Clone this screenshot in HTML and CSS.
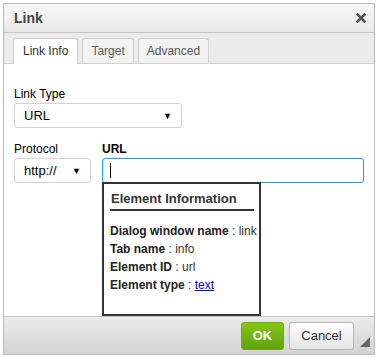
FILE: index.html
```html
<!DOCTYPE html>
<html lang="en">
<head>
  <meta charset="UTF-8" />
  <title>Link</title>
  <link rel="stylesheet" href="styles.css">
</head>
<body>

<div class="dialog">
  <div class="title-bar">
    <span class="title">Link</span>
    <svg class="close" width="10" height="10" viewBox="0 0 10 10">
      <path d="M1.5 1.5 L8.5 8.5 M8.5 1.5 L1.5 8.5" stroke="#555" stroke-width="2.6" stroke-linecap="square"/>
    </svg>
  </div>

  <div class="tabs">
    <div class="tab active">Link Info</div>
    <div class="tab">Target</div>
    <div class="tab">Advanced</div>
  </div>

  <div class="content">
    <div class="field">
      <label>Link Type</label>
      <div class="select type-select"><span>URL</span><span class="arrow">&#9660;</span></div>
    </div>

    <div class="row">
      <div class="field">
        <label>Protocol</label>
        <div class="select proto-select"><span>http://</span><span class="arrow">&#9660;</span></div>
      </div>
      <div class="field url-field">
        <label class="bold">URL</label>
        <div class="input"><span class="caret"></span></div>
        <div class="info">
          <div class="info-title">Element Information</div>
          <div class="info-line"><b>Dialog window name</b> : link</div>
          <div class="info-line"><b>Tab name</b> : info</div>
          <div class="info-line"><b>Element ID</b> : url</div>
          <div class="info-line"><b>Element type</b> : <a href="#">text</a></div>
        </div>
      </div>
    </div>
  </div>

  <div class="footer">
    <button class="btn ok">OK</button>
    <button class="btn cancel">Cancel</button>
    <span class="grip"></span>
  </div>
</div>

</body>
</html>
```

FILE: styles.css
```css
body {
  margin: 0;
  padding: 3px;
  background: #fff;
  font-family: "Liberation Sans", Arial, sans-serif;
  font-size: 12px;
  color: #333;
}
.dialog {
  width: 370px;
  height: 350px;
  border: 1px solid #bcbcbc;
  display: flex;
  flex-direction: column;
  background: #fff;
}
.title-bar {
  height: 28px;
  border-bottom: 1px solid #c5c5c5;
  background: linear-gradient(#f8f8f8, #e9e9e9);
  display: flex;
  align-items: center;
  justify-content: space-between;
  padding: 0 8px 0 10px;
}
.title {
  font-weight: bold;
  font-size: 14px;
  color: #474747;
}
.close {
  display: block;
}
.tabs {
  height: 30px;
  background: #ebebeb;
  border-bottom: 1px solid #d1d1d1;
  display: flex;
  align-items: flex-end;
  gap: 4px;
  padding-left: 9px;
}
.tab {
  height: 24px;
  line-height: 24px;
  padding: 0 8px;
  border: 1px solid #d1d1d1;
  border-bottom: none;
  border-radius: 3px 3px 0 0;
  background: #f2f2f2;
  color: #595959;
}
.tab.active {
  background: #fff;
  color: #333;
  height: 25px;
  margin-bottom: -1px;
  padding: 0 9px;
}
.content {
  flex: 1;
  padding: 23px 10px 0 10px;
}
.field label {
  display: block;
  margin-bottom: 1px;
  line-height: 15px;
  color: #000;
}
.field label.bold {
  font-weight: bold;
}
.select {
  box-sizing: border-box;
  height: 25px;
  border: 1px solid #d3d3d3;
  border-radius: 3px;
  display: flex;
  align-items: center;
  justify-content: space-between;
  padding: 0 9px;
  font-size: 13px;
  color: #000;
}
.select .arrow {
  font-size: 9px;
}
.type-select {
  width: 168px;
}
.row {
  display: flex;
  gap: 11px;
  margin-top: 14px;
}
.proto-select {
  width: 77px;
}
.url-field {
  flex: 1;
}
.input {
  box-sizing: border-box;
  height: 25px;
  width: 262px;
  border: 1px solid #139ff7;
  border-radius: 3px;
  padding: 4px 7px;
}
.caret {
  display: block;
  width: 1px;
  height: 15px;
  background: #000;
}
.info {
  box-sizing: border-box;
  width: 159px;
  height: 134px;
  border: 2px solid #333;
  padding: 3px 5px 0 6px;
  margin-top: -1px;
  color: #333;
  white-space: nowrap;
}
.info-title {
  font-weight: bold;
  font-size: 13px;
  padding: 4px 0 3px 1px;
  border-bottom: 2px solid #333;
  margin-bottom: 11px;
}
.info-line {
  line-height: 18px;
}
.info-line b {
  color: #222;
}
.info-line a {
  color: #00e;
}
.footer {
  height: 37px;
  border-top: 1px solid #c5c5c5;
  background: linear-gradient(#ebebeb, #d2d3d2);
  display: flex;
  align-items: center;
  justify-content: flex-end;
  gap: 5px;
  padding-right: 20px;
  position: relative;
}
.btn {
  height: 28px;
  font-family: "Liberation Sans", Arial, sans-serif;
  font-size: 13px;
  font-weight: bold;
  border-radius: 3px;
}
.ok {
  width: 43px;
  padding: 0;
  color: #fff;
  background: linear-gradient(#86c615, #5ea30c);
  border: 1px solid #6ba81a;
}
.cancel {
  width: 65px;
  padding: 0;
  font-weight: normal;
  color: #333;
  background: linear-gradient(#fff, #e4e4e4);
  border: 1px solid #b6b6b6;
}
.grip {
  position: absolute;
  right: 4px;
  bottom: 7px;
  width: 0;
  height: 0;
  border-left: 10px solid transparent;
  border-bottom: 10px solid #666;
}
```
